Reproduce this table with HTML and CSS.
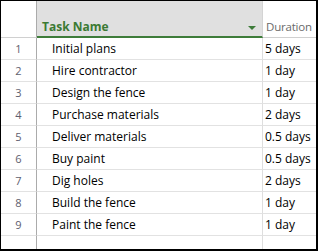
FILE: index.html
```html
<!DOCTYPE html>
<html>
<head>
<meta charset="utf-8">
<link rel="stylesheet" href="styles.css">
</head>
<body>
<div class="frame">
  <div class="sheet">
    <div class="cell h-num"></div>
    <div class="cell h-task"><span class="h-label">Task Name</span><span class="caret"></span></div>
    <div class="cell h-dur">Duration</div>

    <div class="cell num">1</div><div class="cell task">Initial plans</div><div class="cell dur">5 days</div>
    <div class="cell num">2</div><div class="cell task">Hire contractor</div><div class="cell dur">1 day</div>
    <div class="cell num">3</div><div class="cell task">Design the fence</div><div class="cell dur">1 day</div>
    <div class="cell num">4</div><div class="cell task">Purchase materials</div><div class="cell dur">2 days</div>
    <div class="cell num">5</div><div class="cell task">Deliver materials</div><div class="cell dur">0.5 days</div>
    <div class="cell num">6</div><div class="cell task">Buy paint</div><div class="cell dur">0.5 days</div>
    <div class="cell num">7</div><div class="cell task">Dig holes</div><div class="cell dur">2 days</div>
    <div class="cell num">8</div><div class="cell task">Build the fence</div><div class="cell dur">1 day</div>
    <div class="cell num">9</div><div class="cell task">Paint the fence</div><div class="cell dur">1 day</div>

    <div class="cell num empty"></div><div class="cell task empty"></div><div class="cell dur empty"></div>
  </div>
</div>
</body>
</html>
```
FILE: styles.css
```css
html, body {
  margin: 0;
  padding: 0;
  background: #ffffff;
}
.frame {
  box-sizing: border-box;
  width: 318px;
  height: 251px;
  border-style: solid;
  border-color: #000;
  border-width: 1px 2px 2px 1px;
  overflow: hidden;
  font-family: "Open Sans", "Noto Sans", sans-serif;
  font-size: 12px;
  color: #000;
}
.sheet {
  display: grid;
  grid-template-columns: 36px 226px 1fr;
  grid-template-rows: 37px repeat(9, 22px) 1fr;
  height: 100%;
}
.cell {
  box-sizing: border-box;
  display: flex;
  align-items: center;
  white-space: nowrap;
  overflow: hidden;
  border-bottom: 1px solid #e2e2e2;
}
.h-num {
  border-right: 1px solid #ababab;
  border-bottom: 1px solid #d0d0d0;
}
.h-task {
  background: #e0e0e0;
  border-right: 1px solid #d4d4d4;
  border-bottom: 2px solid #3e7c3a;
  padding: 15px 0 0 5px;
  justify-content: space-between;
}
.h-label {
  color: #3b7a33;
  font-weight: 700;
  font-size: 12px;
}
.caret {
  width: 0;
  height: 0;
  border-left: 4px solid transparent;
  border-right: 4px solid transparent;
  border-top: 4px solid #3e7c3a;
  margin: 3px 6px 0 0;
}
.h-dur {
  color: #6a6a6a;
  font-size: 11.5px;
  padding: 15px 0 0 3px;
  border-bottom: 1px solid #d0d0d0;
  letter-spacing: -0.2px;
}
.num {
  justify-content: center;
  border-right: 1px solid #ababab;
  color: #5e5e6e;
  font-size: 11px;
}
.task {
  padding-left: 15px;
  border-right: 1px solid #dedede;
}
.dur {
  padding-left: 2px;
}
.empty {
  border-bottom: none;
}
```
